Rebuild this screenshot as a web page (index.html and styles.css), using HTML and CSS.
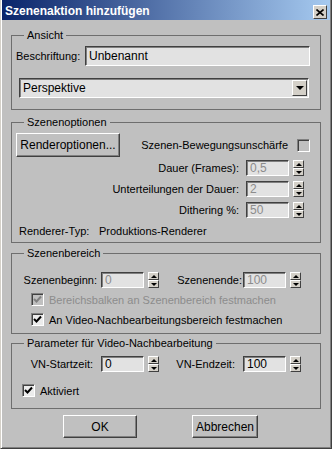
FILE: index.html
```html
<!DOCTYPE html>
<html lang="de">
  <head>
    <meta charset="UTF-8" />
    <title>Szenenaktion hinzufügen</title>
    <link rel="stylesheet" href="styles.css">
  </head>
  <body>
    <div class="window">
      <div class="titlebar">
        <span class="title">Szenenaktion hinzufügen</span>
        <span class="close">
          <svg width="8" height="7" viewBox="0 0 8 7">
            <path d="M0.5 0.5 L7.5 6.5 M7.5 0.5 L0.5 6.5" stroke="#000" stroke-width="1.6" fill="none" />
          </svg>
        </span>
      </div>

      <div class="content">
        <fieldset class="group group-view">
          <legend>Ansicht</legend>
          <div class="row">
            <span class="caption-label">Beschriftung:</span>
            <div class="textbox textbox-wide">Unbenannt</div>
          </div>
          <div class="dropdown">
            <span>Perspektive</span>
            <span class="drop-button"><span class="arrow-down"></span></span>
          </div>
        </fieldset>

        <fieldset class="group group-options">
          <legend>Szenenoptionen</legend>
          <div class="row row-top">
            <div class="button button-render">Renderoptionen...</div>
            <div class="check-right">
              <span>Szenen-Bewegungsunschärfe</span>
              <span class="checkbox disabled"></span>
            </div>
          </div>
          <div class="spin-row">
            <span>Dauer (Frames):</span>
            <div class="textbox textbox-num disabled">0,5</div>
            <span class="spin"><span class="spin-up"></span><span class="spin-down"></span></span>
          </div>
          <div class="spin-row">
            <span>Unterteilungen der Dauer:</span>
            <div class="textbox textbox-num disabled">2</div>
            <span class="spin"><span class="spin-up"></span><span class="spin-down"></span></span>
          </div>
          <div class="spin-row">
            <span>Dithering %:</span>
            <div class="textbox textbox-num disabled">50</div>
            <span class="spin"><span class="spin-up"></span><span class="spin-down"></span></span>
          </div>
          <div class="row renderer-row">
            <span class="renderer-label">Renderer-Typ:</span>
            <span>Produktions-Renderer</span>
          </div>
        </fieldset>

        <fieldset class="group group-range">
          <legend>Szenenbereich</legend>
          <div class="pair-row">
            <span class="pair-label first">Szenenbeginn:</span>
            <div class="textbox textbox-num disabled">0</div>
            <span class="spin"><span class="spin-up"></span><span class="spin-down"></span></span>
            <span class="pair-label second">Szenenende:</span>
            <div class="textbox textbox-num disabled">100</div>
            <span class="spin"><span class="spin-up"></span><span class="spin-down"></span></span>
          </div>
          <div class="check-row check-range first-check">
            <span class="checkbox checked disabled">
              <svg width="9" height="9" viewBox="0 0 9 9"><path d="M1 4 L3.5 6.5 L8 1.5" stroke="#808080" stroke-width="2" fill="none" /></svg>
            </span>
            <span class="text-disabled">Bereichsbalken an Szenenbereich festmachen</span>
          </div>
          <div class="check-row check-range second-check">
            <span class="checkbox checked">
              <svg width="9" height="9" viewBox="0 0 9 9"><path d="M1 4 L3.5 6.5 L8 1.5" stroke="#000" stroke-width="2" fill="none" /></svg>
            </span>
            <span>An Video-Nachbearbeitungsbereich festmachen</span>
          </div>
        </fieldset>

        <fieldset class="group group-video">
          <legend>Parameter für Video-Nachbearbeitung</legend>
          <div class="pair-row">
            <span class="pair-label first vn">VN-Startzeit:</span>
            <div class="textbox textbox-num">0</div>
            <span class="spin"><span class="spin-up"></span><span class="spin-down"></span></span>
            <span class="pair-label second vn">VN-Endzeit:</span>
            <div class="textbox textbox-num">100</div>
            <span class="spin"><span class="spin-up"></span><span class="spin-down"></span></span>
          </div>
          <div class="check-row check-active">
            <span class="checkbox checked">
              <svg width="9" height="9" viewBox="0 0 9 9"><path d="M1 4 L3.5 6.5 L8 1.5" stroke="#000" stroke-width="2" fill="none" /></svg>
            </span>
            <span>Aktiviert</span>
          </div>
        </fieldset>

        <div class="dialog-buttons">
          <div class="button button-ok">OK</div>
          <div class="button button-cancel">Abbrechen</div>
        </div>
      </div>
    </div>
  </body>
</html>
```

FILE: styles.css
```css
body {
  margin: 0;
  font-family: "Liberation Sans", Arial, sans-serif;
  font-size: 11px;
  color: #000;
  background-color: #c0c0c0;
}

.window {
  width: 332px;
  height: 449px;
  box-sizing: border-box;
  background-color: #c0c0c0;
  border-left: 1px solid #d4d0c8;
  border-right: 1px solid #404040;
  border-bottom: 1px solid #404040;
  box-shadow: inset 1px 0 #ffffff, inset -1px -1px #808080;
  padding: 0 1px 1px 1px;
}

.titlebar {
  height: 20px;
  display: flex;
  align-items: center;
  justify-content: space-between;
  padding: 0 3px 0 3px;
  background: linear-gradient(to right, #0a246a, #a6caf0);
}

.title {
  color: white;
  font-weight: bold;
  font-size: 12px;
  margin-top: 1px;
}

.close {
  width: 14px;
  height: 14px;
  box-sizing: border-box;
  display: flex;
  align-items: center;
  justify-content: center;
  background-color: #d4d0c8;
  border: 1px solid;
  border-color: #ffffff #404040 #404040 #ffffff;
  margin-top: 4px;
}

.content {
  display: flex;
  flex-direction: column;
  padding: 0 9px 0 9px;
}

.group {
  margin: 0;
  padding: 0;
  border: 1px solid #6e6e6e;
  min-width: 0;
}

.group legend {
  padding: 0 3px;
  margin-left: 8px;
  line-height: 13px;
}

.row {
  display: flex;
  align-items: center;
}

/* Ansicht */
.group-view {
  margin-top: 9px;
  padding: 4px 10px 11px 4px;
}

.caption-label {
  width: 69px;
}

.textbox {
  box-sizing: border-box;
  background-color: #e2e2e2;
  border: 1px solid;
  border-color: #404040 #ffffff #ffffff #404040;
  box-shadow: inset 1px 1px #808080;
  padding-left: 3px;
  display: flex;
  align-items: center;
}

.textbox-wide {
  flex: 1;
  height: 20px;
  font-size: 12px;
}

.textbox-num {
  width: 43px;
  height: 16px;
  font-size: 12px;
}

.textbox.disabled {
  color: #8c8c8c;
}

.dropdown {
  margin: 12px 1px 0 3px;
  height: 20px;
  box-sizing: border-box;
  display: flex;
  align-items: center;
  justify-content: space-between;
  background-color: #e2e2e2;
  border: 1px solid;
  border-color: #404040 #ffffff #ffffff #404040;
  box-shadow: inset 1px 1px #808080;
  padding: 0 1px 0 3px;
  font-size: 12px;
}

.drop-button {
  width: 15px;
  height: 16px;
  box-sizing: border-box;
  display: flex;
  align-items: center;
  justify-content: center;
  background-color: #d4d0c8;
  border: 1px solid;
  border-color: #ffffff #404040 #404040 #ffffff;
}

.arrow-down {
  width: 0;
  height: 0;
  border-left: 4px solid transparent;
  border-right: 4px solid transparent;
  border-top: 4px solid #000;
}

/* Szenenoptionen */
.group-options {
  margin-top: 6px;
  padding: 4px 10px 5px 4px;
}

.row-top {
  justify-content: space-between;
}

.button {
  box-sizing: border-box;
  display: flex;
  align-items: center;
  justify-content: center;
  background-color: #c0c0c0;
  border: 1px solid;
  border-color: #ffffff #404040 #404040 #ffffff;
  box-shadow: inset -1px -1px #808080;
  font-size: 12px;
}

.button-render {
  width: 104px;
  height: 24px;
}

.check-right {
  display: flex;
  align-items: center;
  gap: 9px;
}

.checkbox {
  width: 13px;
  height: 13px;
  box-sizing: border-box;
  display: inline-flex;
  align-items: center;
  justify-content: center;
  background-color: #ececec;
  border: 1px solid;
  border-color: #808080 #ffffff #ffffff #808080;
  box-shadow: inset 1px 1px #404040;
}

.checkbox.disabled {
  background-color: #c0c0c0;
}

.spin-row {
  display: flex;
  align-items: center;
  justify-content: flex-end;
  height: 16px;
  margin-top: 5px;
  padding-right: 6px;
}

.row-top + .spin-row {
  margin-top: 3px;
}

.spin-row .textbox {
  margin-left: 7px;
}

.spin {
  margin-left: 4px;
  width: 11px;
  height: 16px;
  display: flex;
  flex-direction: column;
}

.spin-up,
.spin-down {
  flex: 1;
  box-sizing: border-box;
  display: flex;
  align-items: center;
  justify-content: center;
  background-color: #d4d0c8;
  border: 1px solid;
  border-color: #ffffff #404040 #404040 #ffffff;
}

.spin-up::after {
  content: "";
  border-left: 3px solid transparent;
  border-right: 3px solid transparent;
  border-bottom: 3px solid #000;
}

.spin-down::after {
  content: "";
  border-left: 3px solid transparent;
  border-right: 3px solid transparent;
  border-top: 3px solid #000;
}

.renderer-row {
  margin-top: 6px;
  height: 13px;
  padding-left: 3px;
}

.renderer-label {
  width: 80px;
}

/* Szenenbereich */
.group-range {
  margin-top: 4px;
  padding: 12px 10px 7px 4px;
}

.pair-row {
  display: flex;
  align-items: center;
  height: 16px;
}

.pair-label {
  text-align: right;
  padding-right: 4px;
}

.pair-label.first {
  width: 81px;
}

.pair-label.second {
  width: 83px;
  padding-right: 1px;
}

.pair-label.vn {
  padding-right: 8px;
}

.pair-label.first.vn {
  width: 77px;
}

.pair-label.second.vn {
  width: 76px;
}

.check-row {
  display: flex;
  align-items: center;
  gap: 5px;
  height: 13px;
}

.check-range {
  padding-left: 15px;
}

.first-check {
  margin-top: 5px;
}

.second-check {
  margin-top: 7px;
}

.text-disabled {
  color: #8c8c8c;
}

/* Parameter fuer Video-Nachbearbeitung */
.group-video {
  margin-top: 3px;
  padding: 6px 10px 11px 4px;
}

.check-active {
  margin-top: 12px;
  padding-left: 6px;
}

.dialog-buttons {
  display: flex;
  gap: 55px;
  margin-top: 6px;
  padding-left: 52px;
}

.button-ok {
  width: 74px;
  height: 23px;
}

.button-cancel {
  width: 66px;
  height: 23px;
}
```
